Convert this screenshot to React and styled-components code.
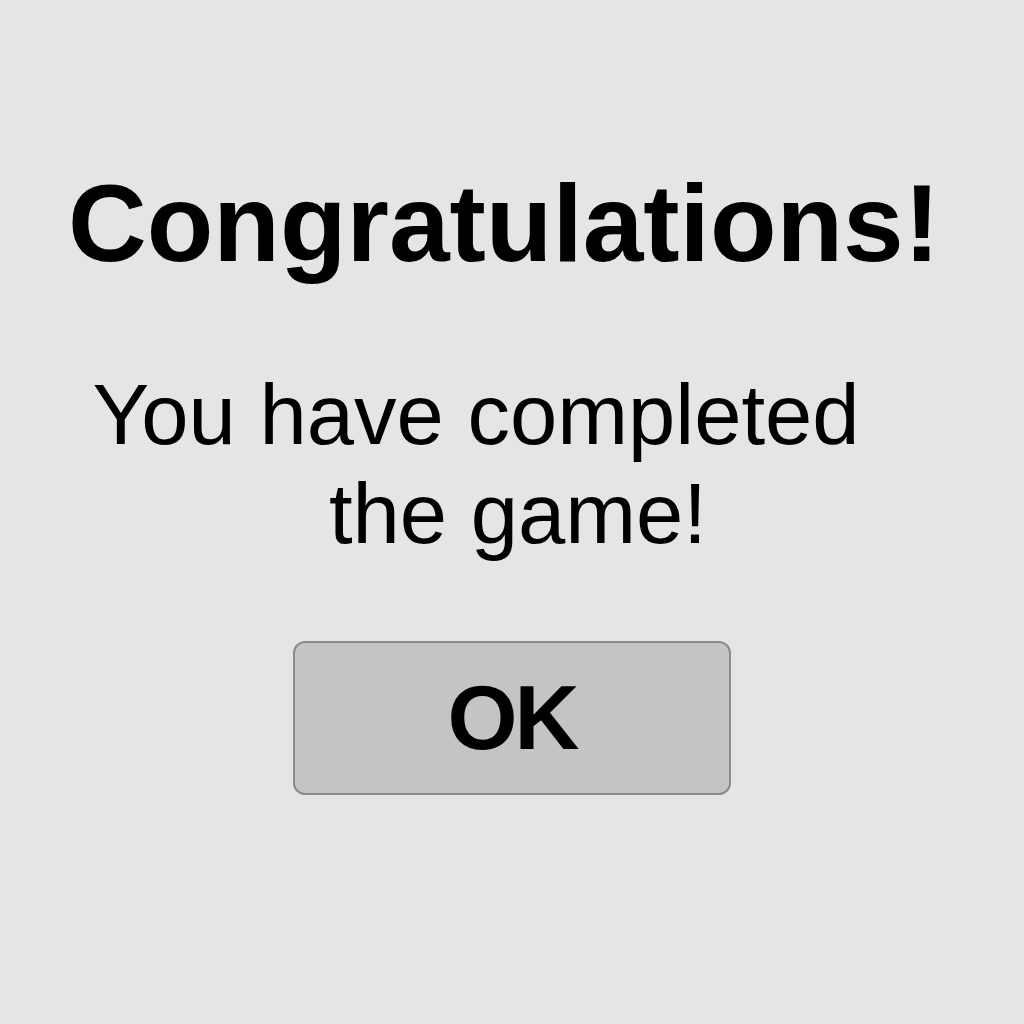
import React from "react";
import styled, { createGlobalStyle } from "styled-components";

const Global = createGlobalStyle`
  html, body { margin: 0; padding: 0; background: #e5e5e5; }
  #root { min-height: 1024px; }
`;

const Page = styled.main`
  box-sizing: border-box;
  width: 1024px;
  height: 1024px;
  background: #e5e5e5;
  padding-top: 168px;
  display: flex;
  flex-direction: column;
  align-items: center;
  font-family: "Liberation Sans", Arial, sans-serif;
  color: #000;
`;

const Title = styled.h1`
  margin: 0 16px 0 0;
  font-size: 109px;
  line-height: 110px;
  font-weight: 700;
  letter-spacing: 0;
`;

const Message = styled.p`
  margin: 87px 0 0 0;
  display: flex;
  flex-direction: column;
  align-items: center;
  font-size: 85px;
  line-height: 99px;
  font-weight: 400;
`;

const Line = styled.span`
  display: block;
  white-space: nowrap;
  margin-left: ${(p) => (p.$shift > 0 ? p.$shift * 2 : 0)}px;
  margin-right: ${(p) => (p.$shift < 0 ? -p.$shift * 2 : 0)}px;
`;

const OkButton = styled.button`
  box-sizing: border-box;
  margin-top: 78px;
  width: 438px;
  height: 154px;
  background: #c4c4c4;
  border: 2px solid #8c8c8c;
  border-radius: 12px;
  font-family: "Liberation Sans", Arial, sans-serif;
  font-size: 90px;
  font-weight: 700;
  letter-spacing: -3px;
  color: #000;
  display: flex;
  align-items: center;
  justify-content: center;
  padding: 0;
  cursor: pointer;
`;

export default function App() {
  return (
    <>
      <Global />
      <Page>
        <Title>Congratulations!</Title>
        <Message>
          <Line $shift={-36}>You have completed</Line>
          <Line $shift={6}>the game!</Line>
        </Message>
        <OkButton>OK</OkButton>
      </Page>
    </>
  );
}
